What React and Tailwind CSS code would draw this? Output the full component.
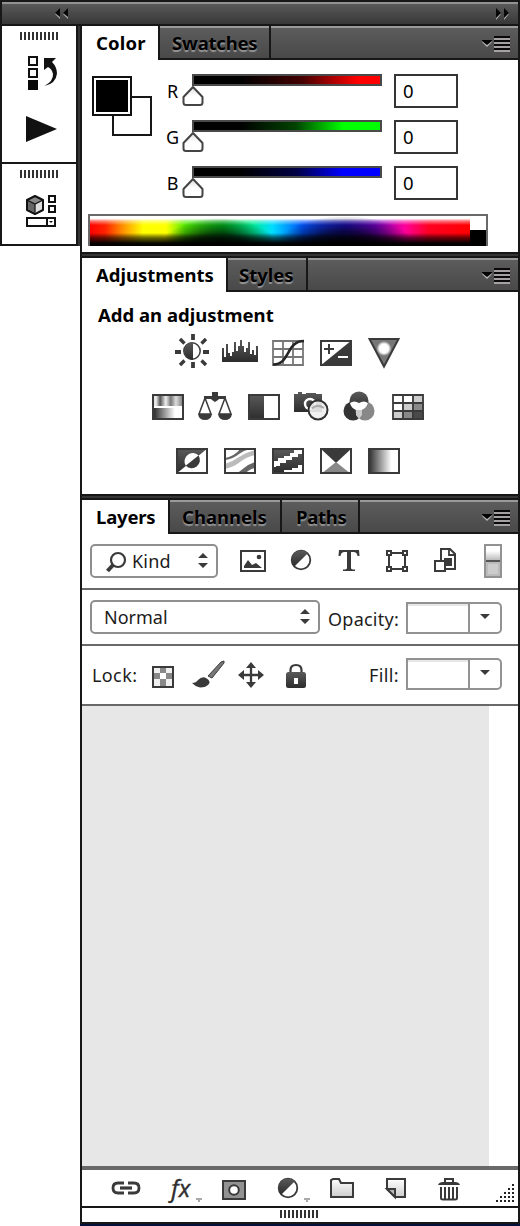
import React from 'react';

const INK = '#3a3a3a';

// Icons share one drawing grid, so each cell shows its own slice of it.
function Icon({ x, y, w, h, children }) {
  return (
    <svg className="block shrink-0" width={w} height={h} viewBox={`${x} ${y} ${w} ${h}`} fill="none">
      {children}
    </svg>
  );
}

function PanelMenu() {
  return (
    <Icon x={480} y={28} w={38} h={30}>
      <path d="M482 42l5 5 5-5v-1H482z" fill="#b5b5b5" />
      <path d="M482 40h10v1l-5 4-5-4z" fill="#000" />
      <path d="M494 37h16M494 41h16M494 45h16M494 49h16" stroke="#0a0a0a" strokeWidth="2" />
      <path d="M494 39h16M494 43h16M494 47h16M494 51h16" stroke="#a5a0a2" strokeWidth="2" />
    </Icon>
  );
}

function Tab({ children, className, active }) {
  return active ? (
    <div className={`h-[34px] shrink-0 bg-white pl-[14px] leading-[34px] ${className}`}>{children}</div>
  ) : (
    <div
      className={`h-[34px] shrink-0 border-b-2 border-l-2 border-[#171717] leading-[34px] [text-shadow:0_2px_1px_#969696] ${className}`}
    >
      {children}
    </div>
  );
}

function TabBar({ children }) {
  return (
    <div className="flex h-[34px] bg-[linear-gradient(#9a9a9a_0px,#9a9a9a_2px,#5c5c5c_2px,#494949_32px)] font-bold text-[18.5px] text-black">
      {children}
      <div className="flex h-[34px] flex-1 justify-end border-b-2 border-l-2 border-[#171717] pt-[2px]">
        <PanelMenu />
      </div>
    </div>
  );
}

function Gap() {
  return <div className="h-[6px] border-y-2 border-[#171717] bg-[#353535]" />;
}

function Grip() {
  return (
    <Icon x={20} y={32} w={38} h={8}>
      <path d="M20 36h38" stroke="#333" strokeWidth="8" strokeDasharray="2 2" />
    </Icon>
  );
}

function Channel({ name, track }) {
  return (
    <div className="flex h-[46px] items-start">
      <div className="-ml-px mr-px w-[15px] pt-[4px] text-center text-[18px] leading-[26px]">{name}</div>
      <div className="relative w-[202px] pl-[11px]">
        <div className={`h-[12px] w-[190px] border-2 border-[#4a4a4a] ${track}`} />
        <svg className="absolute left-0 top-[11px]" width="24" height="22" viewBox="0 0 24 22">
          <defs>
            <linearGradient id="thumb" x2="0" y2="1">
              <stop stopColor="#ddd" />
              <stop offset=".5" stopColor="#fff" />
            </linearGradient>
          </defs>
          <path d="M12 2L21.500 12v5.500q0 2.500-2.500 2.500H5q-2.500 0-2.500-2.500V12z" fill="url(#thumb)" stroke="#444" strokeWidth="2" strokeLinejoin="round" />
        </svg>
      </div>
      <div className="ml-[11px] h-[34px] w-[64px] border-2 border-[#353535] pl-[7px] text-[18.5px] leading-[30px]">0</div>
    </div>
  );
}

function Spectrum() {
  return (
    <svg className="block" width="400" height="32" viewBox="88 214 400 32">
      <defs>
        <linearGradient id="hue">
          <stop offset="0" stopColor="#f00" />
          <stop offset=".04" stopColor="#f20" />
          <stop offset=".09" stopColor="#f90" />
          <stop offset=".14" stopColor="#ff0" />
          <stop offset=".2" stopColor="#ff0" />
          <stop offset=".25" stopColor="#5e0" />
          <stop offset=".35" stopColor="#0c2" />
          <stop offset=".43" stopColor="#0e9" />
          <stop offset=".48" stopColor="#0df" />
          <stop offset=".56" stopColor="#05f" />
          <stop offset=".67" stopColor="#21d" />
          <stop offset=".75" stopColor="#70c" />
          <stop offset=".83" stopColor="#f09" />
          <stop offset=".89" stopColor="#f02" />
          <stop offset="1" stopColor="#f00" />
        </linearGradient>
        <linearGradient id="lum" x2="0" y2="1">
          <stop stopColor="#fff" />
          <stop offset=".05" stopColor="#fff" />
          <stop offset=".14" stopColor="#fff" stopOpacity=".45" />
          <stop offset=".28" stopColor="#fff" stopOpacity="0" />
          <stop offset=".55" stopColor="#000" stopOpacity="0" />
          <stop offset=".7" stopColor="#000" stopOpacity=".55" />
          <stop offset=".9" stopColor="#000" stopOpacity=".97" />
          <stop offset="1" stopColor="#000" />
        </linearGradient>
        <radialGradient id="shade">
          <stop stopColor="#000" stopOpacity=".9" />
          <stop offset=".45" stopColor="#000" stopOpacity=".68" />
          <stop offset="1" stopColor="#000" stopOpacity="0" />
        </radialGradient>
        <clipPath id="strip">
          <path d="M90 217h380v29H90z" />
        </clipPath>
      </defs>
      <path d="M88 214h400v32h-400z" fill="#fff" />
      <g clipPath="url(#strip)">
        <path d="M90 217h380v29H90z" fill="url(#hue)" />
        <path d="M90 217h380v29H90z" fill="url(#lum)" />
        <ellipse cx="219" cy="246" rx="58" ry="28" fill="url(#shade)" />
        <ellipse cx="345" cy="244" rx="68" ry="28" fill="url(#shade)" />
      </g>
      <path d="M470 230h16v16h-16z" fill="#000" />
      <path d="M89 246V215h398v31" fill="none" stroke="#6b6869" strokeWidth="2" />
    </svg>
  );
}

const frame = (x, y) => <rect x={x + 1} y={y + 1} width="30" height="24" stroke={INK} strokeWidth="2" />;

function Adjustments() {
  return (
    <div className="h-[202px] bg-white pt-[10px] text-black">
      <svg className="absolute" width="0" height="0">
        <defs>
          <linearGradient id="hsl">
            <stop stopColor="#ddd" />
            <stop offset=".07" stopColor="#eee" />
            <stop offset=".22" stopColor="#555" />
            <stop offset=".42" stopColor="#eee" />
            <stop offset=".6" stopColor="#777" />
            <stop offset=".78" stopColor="#ddd" />
            <stop offset="1" stopColor="#888" />
          </linearGradient>
          <linearGradient id="ramp">
            <stop stopColor="#2e2e2e" />
            <stop offset=".75" stopColor="#fff" />
          </linearGradient>
          <radialGradient id="glow">
            <stop offset=".6" stopColor="#fff" />
            <stop offset="1" stopColor="#777" />
          </radialGradient>
          <linearGradient id="ink" x2="0" y2="1">
            <stop stopColor="#5a5a5a" />
            <stop offset="1" stopColor="#2c2c2c" />
          </linearGradient>
        </defs>
      </svg>
      <div className="pl-[16px] text-[18.5px] font-bold leading-[26px]">Add an adjustment</div>
      <div className="mt-[4px] flex pl-[86px]">
        <Icon x={168} y={332} w={48} h={40}>
          <path d="M193 334v6M193 362v6M175 352h6M203 352h6" stroke={INK} strokeWidth="3.800" />
          <path d="M180 339l4.500 4.500M206 339l-4.500 4.500M180 365l4.500-4.500M206 365l-4.500-4.500" stroke={INK} strokeWidth="3.400" />
          <circle cx="192" cy="351" r="8.200" stroke={INK} strokeWidth="1.500" />
          <path d="M193 342a9 9 0 0 0 0 18z" fill="url(#ink)" />
        </Icon>
        <Icon x={216} y={332} w={48} h={40}>
          <path d="M222 362V348H224V357H226V344H228V353H230V356H232V352H234V342H236V351H238V346H240V340H242V346H244V352H246V348H248V342H250V354H252V350H254V355H256V346H258V362z" fill="url(#ink)" />
        </Icon>
        <Icon x={264} y={332} w={48} h={40}>
          <path d="M273 341h30v24h-30zM283 341v24M293 341v24M273 349h30M273 357h30" stroke="#777" strokeWidth="1.800" />
          <path d="M273 364.500C290 365 286 341 304 341" stroke="#262626" strokeWidth="2.600" />
        </Icon>
        <Icon x={312} y={332} w={48} h={40}>
          <path d="M352 340v26h-32z" fill={INK} />
          {frame(320, 340)}
          <path d="M324 349h10M329 344v10" stroke={INK} strokeWidth="2" />
          <path d="M338 357h10" stroke="#fff" strokeWidth="2" />
        </Icon>
        <Icon x={360} y={332} w={48} h={40}>
          <path d="M369.500 339h29L384 366.500z" fill="#777" stroke={INK} strokeWidth="2" />
          <circle cx="384" cy="348.500" r="7.500" fill="url(#glow)" />
        </Icon>
      </div>
      <div className="mt-[14px] flex pl-[62px]">
        <Icon x={144} y={386} w={48} h={40}>
          <path d="M154 396h28v10h-28z" fill="url(#hsl)" />
          <path d="M154 408h28v10h-28z" fill="url(#ramp)" />
          {frame(152, 394)}
        </Icon>
        <Icon x={192} y={386} w={48} h={40}>
          <path d="M212 392h6v4h8v3h-7l-1 1-3 2-3-2-1-1h-7v-3h8z" fill={INK} />
          <path d="M205 398l-6 16h12zM225 398l-6 16h12z" stroke={INK} strokeWidth="1.500" />
          <path d="M198 414h14q-1 6-7 6t-7-6zM218 414h14q-1 6-7 6t-7-6z" fill={INK} />
        </Icon>
        <Icon x={240} y={386} w={48} h={40}>
          <path d="M248 394h16v26h-16z" fill="url(#ink)" />
          {frame(248, 394)}
        </Icon>
        <Icon x={288} y={386} w={48} h={40}>
          <path d="M294 394h4v-2h4v2h4v-1h10v1h6v18h-28z" fill="url(#ink)" />
          <circle cx="310" cy="404" r="5" stroke="#fff" strokeWidth="2.400" fill="#444" />
          <circle cx="318" cy="410" r="9.500" fill="#eee" fillOpacity=".9" stroke="#303030" strokeWidth="2" />
          <path d="M312 408.500q5-5 12-.5" stroke="#aaa" strokeWidth="2" />
        </Icon>
        <Icon x={336} y={386} w={48} h={40}>
          <circle cx="353" cy="411" r="9.500" fill="#333" />
          <circle cx="365" cy="411" r="9.500" fill="#888" />
          <circle cx="359" cy="401" r="9.500" fill="url(#ink)" />
          <path d="M350 403q4-3 9 0 5-3 9 0-1 5-6 7h-6q-5-2-6-7z" fill="#fff" />
          <path d="M356 410h6v5l-3 4-3-4z" fill="#ccc" />
        </Icon>
        <Icon x={384} y={386} w={48} h={40}>
          <path d="M412 394h12v10h-12zM402 404h10v8h-10zM392 412h10v8h-10z" fill="#ccc" />
          <path d="M412 404h12v8h-12zM402 412h10v8h-10z" fill="#888" />
          <path d="M412 412h12v8h-12z" fill="#4a4a4a" />
          <path d="M393 395h30v24h-30zM403 395v24M413 395v24M393 403h30M393 411h30" stroke={INK} strokeWidth="1.800" />
        </Icon>
      </div>
      <div className="mt-[14px] flex pl-[86px]">
        <Icon x={168} y={440} w={48} h={40}>
          <path d="M176 474v-26h32z" fill="url(#ink)" />
          <path d="M185.800 465.800a8.300 8.300 0 0 1 12.800-10.400z" fill="#fff" />
          <path d="M198.600 455.400a8.300 8.300 0 0 1-12.800 10.400z" fill={INK} />
          {frame(176, 448)}
        </Icon>
        <Icon x={216} y={440} w={48} h={40}>
          <path d="M225 458q10-2 16-10h12q-8 2-14 6-6 5-14 6z" fill="#666" />
          <path d="M225 464q7-2 14-7 8-5 16-7v5q-9 2-15 7-6 5-15 7z" fill="#bbb" />
          <path d="M234 474q6-2 10-6 5-4 11-6v6q-6 1-10 6z" fill="#666" />
          {frame(224, 448)}
        </Icon>
        <Icon x={264} y={440} w={48} h={40}>
          <path d="M273 449h30v24h-30z" fill="url(#ink)" />
          <path d="M274 467v-6h4v-3h6v-2h6v-3h4v-3h8v4h-4v3h-6v3h-6v3h-6v3h-4v1zM284 472v-2h8v-2h6v-3h4v7z" fill="#fff" />
          {frame(272, 448)}
        </Icon>
        <Icon x={312} y={440} w={48} h={40}>
          <path d="M320 448h32l-16 15z" fill={INK} />
          <path d="M321 474l15-12 15 12z" fill="#888" />
          {frame(320, 448)}
        </Icon>
        <Icon x={360} y={440} w={48} h={40}>
          <path d="M369 449h30v24h-30z" fill="url(#ramp)" />
          {frame(368, 448)}
        </Icon>
      </div>
    </div>
  );
}

function UpDown() {
  return (
    <Icon x={198} y={551} w={10} h={18}>
      <path d="M198 557l5-5 5 5zM198 562h10l-5 5z" fill={INK} />
    </Icon>
  );
}

function Combo() {
  return (
    <div className="flex h-[32px] w-[96px] rounded-r-[5px] border-2 border-[#929292]">
      <div className="w-[62px] border-r-2 border-[#929292] shadow-[inset_0_2px_0_#e8e8e8]" />
      <Icon x={470} y={604} w={30} h={28}>
        <path d="M480 614h10l-5 5z" fill={INK} />
      </Icon>
    </div>
  );
}

function HalfDisc({ cx, cy }) {
  return (
    <>
      <circle cx={cx} cy={cy} r="9.300" stroke={INK} strokeWidth="1.800" />
      <path d={`M${cx - 6.8} ${cy + 6.8}a9.600 9.600 0 0 1 13.600-13.600z`} fill="url(#ink)" />
    </>
  );
}

function Layers() {
  return (
    <div className="text-[18px] text-[#1c1c1c]">
      <div className="flex h-[56px] items-start border-b-2 border-[#6b6869] bg-white pl-[8px] pt-[10px]">
        <div className="flex h-[34px] w-[128px] items-center rounded-[5px] border-2 border-[#8f8f8f] bg-white pl-[12px]">
          <Icon x={104} y={550} w={28} h={23}>
            <circle cx="118" cy="560" r="7" stroke={INK} strokeWidth="2.200" />
            <path d="M113 565l-5.500 6" stroke={INK} strokeWidth="4" />
          </Icon>
          <span className="w-[66px] leading-[30px] tracking-[.2px]">Kind</span>
          <UpDown />
        </div>
        <Icon x={218} y={544} w={59} h={34}>
          <rect x="241" y="551" width="24" height="20" stroke={INK} strokeWidth="2" />
          <path d="M244 568v-2l4-6 4 5 4-2 6 5z" fill={INK} />
          <circle cx="259" cy="557" r="2.300" fill={INK} />
        </Icon>
        <Icon x={277} y={544} w={47} h={34}>
          <HalfDisc cx={301} cy={560} />
        </Icon>
        <Icon x={324} y={544} w={48} h={34}>
          <path d="M339 550h20l.5 6h-2q-.5-4-4-4H351v16q0 1.500 4 1.500v1.500h-12v-1.500q4 0 4-1.500v-16h-2.500q-3.500 0-4 4h-2z" fill={INK} />
        </Icon>
        <Icon x={372} y={544} w={48} h={34}>
          <path d="M389 553h16v16h-16z" stroke={INK} strokeWidth="2" />
          <path d="M387 551h4v4h-4zM403 551h4v4h-4zM387 567h4v4h-4zM403 567h4v4h-4z" fill="#fff" stroke={INK} strokeWidth="2" />
        </Icon>
        <Icon x={420} y={544} w={64} h={34}>
          <path d="M441 560v-11h9l5 5v15h-10" stroke={INK} strokeWidth="2" />
          <path d="M449 549v6h6" stroke={INK} strokeWidth="1.800" />
          <path d="M435 561h10v10h-10z" fill="#fff" stroke={INK} strokeWidth="2" />
          <path d="M444 558h8v8h-6v-6h-2z" fill={INK} />
        </Icon>
        <div className="flex h-[34px] w-[18px] flex-col border-2 border-[#929292]">
          <div className="h-[14px] bg-[linear-gradient(#fff_35%,#bbb)]" />
          <div className="h-[2px] bg-[#555]" />
          <div className="h-[14px] border-2 border-[#bbb] bg-[#ccc]" />
        </div>
      </div>
      <div className="flex h-[56px] items-start border-b-2 border-[#6b6869] bg-white pl-[8px] pt-[10px]">
        <div className="flex h-[34px] w-[230px] items-center justify-between rounded-[5px] border-2 border-[#8f8f8f] pl-[12px] pr-[8px]">
          <span>Normal</span>
          <UpDown />
        </div>
        <div className="w-[86px] pl-[8px] pt-[2px] leading-[34px] tracking-[.25px]">Opacity:</div>
        <div className="pt-[2px]">
          <Combo />
        </div>
      </div>
      <div className="flex h-[60px] items-start border-b-2 border-[#6b6869] bg-white pl-[10px] pt-[12px]">
        <div className="w-[48px] leading-[34px] tracking-[.4px]">Lock:</div>
        <Icon x={140} y={656} w={44} h={36}>
          <path d="M154 671h6v6h-6zM160 666h6v5h-6zM166 671h6v6h-6zM160 677h6v7h-6z" fill="#888" />
          <path d="M154 666h6v5h-6zM166 677h6v7h-6zM166 666h6v5h-6zM154 677h6v7h-6z" fill="#ddd" fillOpacity=".45" />
          <rect x="153" y="665" width="20" height="20" stroke={INK} strokeWidth="2" />
        </Icon>
        <Icon x={184} y={656} w={46} h={36}>
          <path d="M208 674l13-14 3-1v2l-12 15z" fill="#777" stroke={INK} strokeWidth="1" />
          <path d="M192 681q4 0 6-3 4-4 8-2 5 3 3 6-3 3.500-9 3.500-5-1-8-4.500z" fill={INK} />
        </Icon>
        <Icon x={230} y={656} w={42} h={36}>
          <path d="M251 663v20M241 673h20" stroke={INK} strokeWidth="2.300" />
          <path d="M251 660l5 6h-10zM251 686l5-6h-10zM238 673l6-5v10zM264 673l-6-5v10z" fill={INK} />
        </Icon>
        <Icon x={272} y={656} w={97} h={36}>
          <path d="M290.500 672v-4q0-5 5.500-5t5.500 5v4" stroke={INK} strokeWidth="2.200" />
          <rect x="286" y="670" width="20" height="16" rx="2.500" fill="url(#ink)" />
          <path d="M294 676h4v6h-4z" fill="#fff" />
        </Icon>
        <div className="w-[37px] leading-[34px] tracking-[.4px]">Fill:</div>
        <Combo />
      </div>
      <div className="h-[460px] bg-white">
        <div className="h-full w-[407px] bg-[#e7e7e7]" />
      </div>
      <div className="flex h-[42px] border-b-2 border-t-4 border-b-[#171717] border-t-[#6b6869] bg-white">
        <Icon x={82} y={1170} w={70} h={36}>
          <path d="M124 1183h-6q-5 0-5 5t5 5h6M128 1183h6q5 0 5 5t-5 5h-6" stroke={INK} strokeWidth="2.800" />
          <path d="M120 1188h12" stroke={INK} strokeWidth="3.200" />
        </Icon>
        <div className="flex w-[58px] pl-[19px]">
          <span className="w-[23px] text-[24px] italic leading-[36px] text-[#303030] [-webkit-text-stroke:.3px_#303030]">fx</span>
          <Icon x={194} y={1170} w={10} h={36}>
            <path d="M196 1198h6v2h-2v2h-2v-2h-2z" fill="#aaa" />
          </Icon>
        </div>
        <Icon x={210} y={1170} w={58} h={36}>
          <path d="M223 1181h22v18h-22z" fill="#929292" stroke={INK} strokeWidth="2" />
          <circle cx="234" cy="1190" r="4.800" fill="#fff" stroke={INK} strokeWidth="2" />
        </Icon>
        <Icon x={268} y={1170} w={52} h={36}>
          <HalfDisc cx={288} cy={1188} />
          <path d="M304 1198h6v2h-2v2h-2v-2h-2z" fill="#aaa" />
        </Icon>
        <Icon x={320} y={1170} w={50} h={36}>
          <defs>
            <linearGradient id="sheet" x2="0" y2="1">
              <stop stopColor="#fff" />
              <stop offset="1" stopColor="#ccc" />
            </linearGradient>
          </defs>
          <path d="M331 1197v-17l2-1h6l2 4h12v14z" fill="url(#sheet)" stroke={INK} strokeWidth="2" />
        </Icon>
        <Icon x={370} y={1170} w={52} h={36}>
          <path d="M387 1179h18v18h-10l-8-8z" fill="url(#sheet)" stroke={INK} strokeWidth="2" />
          <path d="M387 1189h8v8z" fill="#bbb" stroke={INK} strokeWidth="2" />
        </Icon>
        <Icon x={422} y={1170} w={64} h={36}>
          <path d="M445 1182v-3h8v3" stroke={INK} strokeWidth="2" />
          <path d="M438 1185q1-3 5-3h12q4 0 5 3z" fill={INK} />
          <path d="M441 1187v11q0 1.500 2 1.500h12q2 0 2-1.500v-11M445 1187v12M449 1187v12M453 1187v12" stroke={INK} strokeWidth="2" />
        </Icon>
        <Icon x={486} y={1170} w={32} h={36}>
          <path d="M496 1201h18M500 1197h14M504 1193h10M508 1189h6M512 1185h2" stroke="#222" strokeWidth="2" strokeDasharray="2 2" />
        </Icon>
      </div>
      <div className="flex h-[16px] justify-center border-b-2 border-[#171717] bg-white pr-[2px] pt-[2px]">
        <Grip />
      </div>
    </div>
  );
}

export default function App() {
  return (
    <div className="h-[1226px] w-[520px] overflow-hidden bg-white font-['Noto_Sans','Open_Sans',sans-serif] text-black">
      <header className="flex h-[26px] justify-between border-2 border-[#171717] bg-[linear-gradient(#929292_0px,#929292_2px,#595959_2px,#383838_22px)]">
        <Icon x={2} y={2} w={80} h={22}>
          <path d="M60 10v9l-5-5zM68 10v9l-5-5z" fill="#aaa" />
          <path d="M60 8v9l-5-4zM68 8v9l-5-4z" fill="#080808" />
        </Icon>
        <Icon x={480} y={2} w={38} h={22}>
          <path d="M496 20v-9l5 3zM504 20v-9l5 3z" fill="#aaa" />
          <path d="M496 8v10l5-5zM504 8v10l5-5z" fill="#080808" />
        </Icon>
      </header>
      <div className="flex h-[1198px]">
        <aside className="flex h-[220px] w-[80px] shrink-0 border-r-2 border-[#353535]">
          <div className="w-[78px] border-x-2 border-b-2 border-[#171717] bg-white">
            <div className="h-[138px] border-b-2 border-[#171717] pl-[18px] pt-[6px]">
              <Grip />
              <Icon x={20} y={40} w={40} h={110}>
                <path d="M29 57h8v8h-8zM29 69h8v8h-8z" stroke="#111" strokeWidth="2" />
                <path d="M28 80h10v10H28z" fill="#080808" />
                <path d="M44 58h12l-4 4q5 5 5 11.500-1 10-12.500 12.500 9-5 8.500-12-1-5-5-7l-4 3z" fill="#111" />
                <path d="M26 116l31 13-31 13z" fill="#111" />
              </Icon>
            </div>
            <div className="pl-[18px] pt-[6px]">
              <Grip />
              <Icon x={20} y={178} w={40} h={62}>
                <path d="M35 196l8 4v10l-8 4-8-4v-10z" fill="#888" stroke="#111" strokeWidth="2" strokeLinejoin="round" />
                <path d="M28 201l7 3v9l-7-4z" fill="#666" />
                <path d="M42 201l-7 3v9l7-4z" fill="#ddd" />
                <path d="M27 200l8 4 8-4M35 204v10" stroke="#111" strokeWidth="1.200" />
                <path d="M49 196h6v6h-6zM49 206h6v6h-6zM27 218h28v8H27zM47 218v8" stroke="#111" strokeWidth="2" />
                <path d="M49 221h4l-2 2z" fill="#111" />
              </Icon>
            </div>
          </div>
        </aside>
        <main className="w-[440px] shrink-0 border-x-2 border-b-2 border-[#171717] bg-white">
          <TabBar>
            <Tab active className="w-[76px] tracking-[.2px]">Color</Tab>
            <Tab className="w-[111px] pl-[12px] tracking-[-.2px]">Swatches</Tab>
          </TabBar>
          <section className="flex h-[192px] flex-col bg-white pt-[14px]">
            <div className="flex h-[140px]">
              <div className="relative w-[84px] shrink-0">
                <div className="absolute left-[30px] top-[22px] size-[40px] border-2 border-[#171717] bg-white" />
                <div className="absolute left-[10px] top-[2px] size-[40px] border-2 border-[#111] bg-black shadow-[inset_0_0_0_2px_#fff]" />
              </div>
              <div>
                <Channel name="R" track="bg-[linear-gradient(90deg,#000_0%,#000_25%,#400_58%,#f00_88%)]" />
                <Channel name="G" track="bg-[linear-gradient(90deg,#000_0%,#000_25%,#040_55%,#0f0_80%)]" />
                <Channel name="B" track="bg-[linear-gradient(90deg,#000_0%,#000_25%,#004_55%,#00f_80%)]" />
              </div>
            </div>
            <div className="pl-[6px]">
              <Spectrum />
            </div>
          </section>
          <Gap />
          <TabBar>
            <Tab active className="w-[144px]">Adjustments</Tab>
            <Tab className="w-[80px] pl-[11px]">Styles</Tab>
          </TabBar>
          <Adjustments />
          <Gap />
          <TabBar>
            <Tab active className="w-[86px] tracking-[-.2px]">Layers</Tab>
            <Tab className="w-[112px] pl-[12px]">Channels</Tab>
            <Tab className="w-[78px] pl-[14px] tracking-[-.3px]">Paths</Tab>
          </TabBar>
          <Layers />
        </main>
      </div>
      <div className="ml-[80px] h-[2px] bg-[#04103a]" />
    </div>
  );
}
